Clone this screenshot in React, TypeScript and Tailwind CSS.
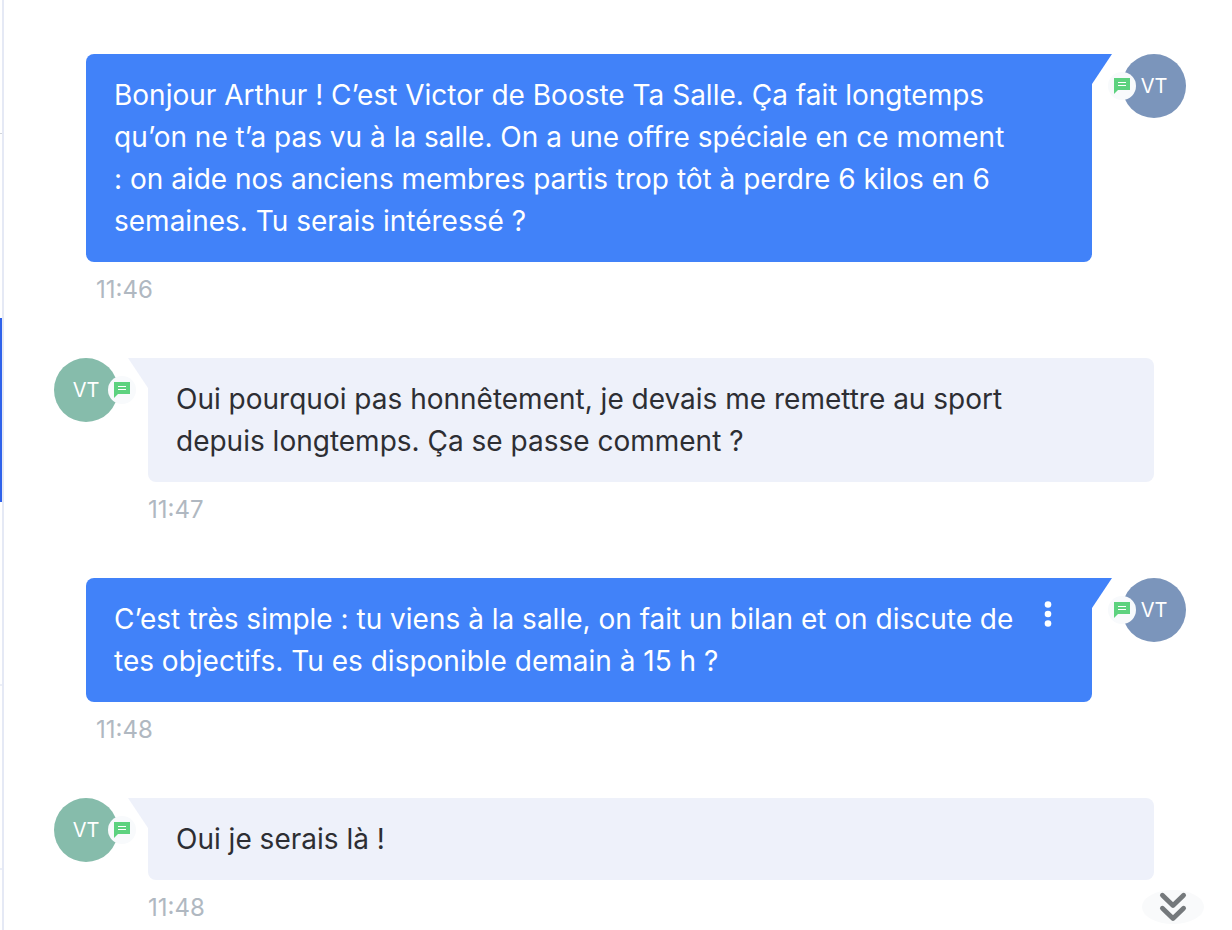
import React from 'react';
import clsx from 'clsx';

interface Message {
    id: number;
    text: string;
    time: string;
    outgoing: boolean;
    hasMenu?: boolean;
}

const messages: Message[] = [
    {
        id: 1,
        text: 'Bonjour Arthur ! C’est Victor de Booste Ta Salle. Ça fait longtemps qu’on ne t’a pas vu à la salle. On a une offre spéciale en ce moment : on aide nos anciens membres partis trop tôt à perdre 6 kilos en 6 semaines. Tu serais intéressé ?',
        time: '11:46',
        outgoing: true,
    },
    {
        id: 2,
        text: 'Oui pourquoi pas honnêtement, je devais me remettre au sport depuis longtemps. Ça se passe comment ?',
        time: '11:47',
        outgoing: false,
    },
    {
        id: 3,
        text: 'C’est très simple : tu viens à la salle, on fait un bilan et on discute de tes objectifs. Tu es disponible demain à 15 h ?',
        time: '11:48',
        outgoing: true,
        hasMenu: true,
    },
    {
        id: 4,
        text: 'Oui je serais là !',
        time: '11:48',
        outgoing: false,
    },
];

const Avatar: React.FC<{ outgoing: boolean }> = ({ outgoing }) => (
    <div
        className={clsx(
            'relative flex size-16 shrink-0 items-center justify-center rounded-full text-xl text-white',
            outgoing ? 'bg-[#7b95bb]' : 'bg-[#86bcab]'
        )}
    >
        VT
        <span
            className={clsx(
                'absolute top-[18px] flex size-7 items-center justify-center rounded-full bg-[#f8fafc]',
                outgoing ? '-left-[14px]' : '-right-[18px]'
            )}
        >
            <svg viewBox="0 0 16 16" className="size-4" aria-hidden="true">
                <path d="M0 0h16v12H4l-4 4z" fill="#5dd27f" />
                <path d="M4 4.5h8M4 7.5h8" stroke="#fff" strokeWidth="1.2" />
            </svg>
        </span>
    </div>
);

const MessageRow: React.FC<{ message: Message }> = ({ message }) => {
    const { text, time, outgoing, hasMenu } = message;

    return (
        <li className={clsx('flex items-start gap-[30px]', outgoing ? 'ml-8 flex-row-reverse' : 'mr-8')}>
            <Avatar outgoing={outgoing} />
            <div className="min-w-0 flex-1">
                <div
                    className={clsx(
                        'relative rounded-lg py-5 pr-[76px] pl-7',
                        outgoing ? 'rounded-tr-none bg-[#4182f9] text-white' : 'rounded-tl-none bg-[#eef1fa] text-[#2d2e33]'
                    )}
                >
                    {/* bubble tail */}
                    <span
                        className={clsx(
                            'absolute top-0 h-[30px] w-5',
                            outgoing
                                ? 'left-full bg-[#4182f9] [clip-path:polygon(0_0,100%_0,0_100%)]'
                                : 'right-full bg-[#eef1fa] [clip-path:polygon(0_0,100%_0,100%_100%)]'
                        )}
                    />
                    <p className="text-[28px] leading-[42px]">{text}</p>
                    {hasMenu && (
                        <button type="button" aria-label="Options du message" className="absolute top-5 right-8 h-8 w-6">
                            <svg viewBox="0 0 24 32" className="h-8 w-6" fill="currentColor">
                                <circle cx="12" cy="6.5" r="3.3" />
                                <circle cx="12" cy="16" r="3.3" />
                                <circle cx="12" cy="25.5" r="3.3" />
                            </svg>
                        </button>
                    )}
                </div>
                <time className={clsx('mt-[10px] block text-2xl leading-9 text-[#b0b8c1]', outgoing && 'ml-[10px]')}>
                    {time}
                </time>
            </div>
        </li>
    );
};

const App: React.FC = () => {
    return (
        <div className="relative flex h-screen overflow-hidden bg-white font-['Inter',sans-serif]">
            {/* edge of the conversation list */}
            <div className="flex w-1 shrink-0 flex-col border-r-2 border-[#e5e9f5]">
                <div className="h-[134px] shrink-0 border-b border-[#d1d5db]" />
                <div className="h-[184px] shrink-0" />
                <div className="h-[184px] shrink-0 bg-[#2f62ea]" />
                <div className="h-[184px] shrink-0 border-b-2 border-[#eceff7]" />
                <div className="h-[184px] shrink-0 border-b-2 border-[#eceff7]" />
            </div>

            <main className="min-w-0 flex-1 overflow-hidden pt-[54px] pr-[46px] pl-[50px]">
                <ul className="flex flex-col gap-[50px]">
                    {messages.map((message) => (
                        <MessageRow key={message.id} message={message} />
                    ))}
                </ul>
            </main>

            <button
                type="button"
                aria-label="Aller au dernier message"
                className="absolute right-7 bottom-[6px] flex h-[34px] w-[62px] items-center justify-center rounded-[50%] bg-[#f9fafb]"
            >
                <svg
                    viewBox="0 0 32 32"
                    className="size-8"
                    fill="none"
                    stroke="#75797c"
                    strokeWidth="4.8"
                    strokeLinecap="round"
                    strokeLinejoin="round"
                >
                    <path d="M5.4 4.2L16 14.4L26.6 4.2M5.4 17.2L16 27.4L26.6 17.2" />
                </svg>
            </button>
        </div>
    );
};

export default App;
